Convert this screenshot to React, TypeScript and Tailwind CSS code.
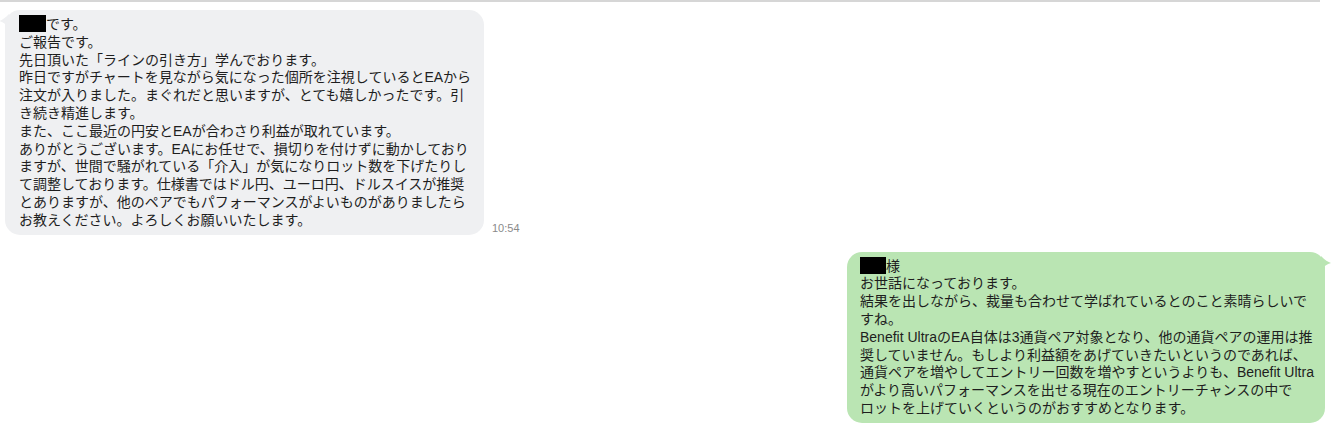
import React from "react";

const leftLines = [
  "ご報告です。",
  "先日頂いた「ラインの引き方」学んでおります。",
  "昨日ですがチャートを見ながら気になった個所を注視しているとEAから",
  "注文が入りました。まぐれだと思いますが、とても嬉しかったです。引",
  "き続き精進します。",
  "また、ここ最近の円安とEAが合わさり利益が取れています。",
  "ありがとうございます。EAにお任せで、損切りを付けずに動かしており",
  "ますが、世間で騒がれている「介入」が気になりロット数を下げたりし",
  "て調整しております。仕様書ではドル円、ユーロ円、ドルスイスが推奨",
  "とありますが、他のペアでもパフォーマンスがよいものがありましたら",
  "お教えください。よろしくお願いいたします。",
];

const rightLines = [
  "お世話になっております。",
  "結果を出しながら、裁量も合わせて学ばれているとのこと素晴らしいで",
  "すね。",
  "Benefit UltraのEA自体は3通貨ペア対象となり、他の通貨ペアの運用は推",
  "奨していません。もしより利益額をあげていきたいというのであれば、",
  "通貨ペアを増やしてエントリー回数を増やすというよりも、Benefit Ultra",
  "がより高いパフォーマンスを出せる現在のエントリーチャンスの中で",
  "ロットを上げていくというのがおすすめとなります。",
];

export default function App() {
  return (
    <div
      className="w-[1332px] h-[432px] bg-white text-[#1e1e1e] overflow-hidden"
      style={{ fontFamily: '"Liberation Sans", "Noto Sans CJK JP", sans-serif' }}
    >
      <div className="h-[2px] w-[1320px] bg-[#d6d6d6]" />
      <div className="flex items-end mt-[8px]">
        <div className="relative ml-[5px] w-[479px] rounded-[15px] bg-[#eff0f2] pl-[14px] pr-[10px] py-[5px] text-[14px] leading-[17.8px]">
          <svg className="absolute left-[-6px] top-[4px]" width="10" height="14" viewBox="0 0 10 14">
            <path d="M10 0 C6 4 3 6 0 7 C4 8 7 10 10 14 Z" fill="#eff0f2" />
          </svg>
          <div className="whitespace-nowrap">
            <span className="inline-block w-[27px] h-[17px] bg-black align-[-3px]" />
            です。
          </div>
          {leftLines.map((l, i) => (
            <div key={i} className="whitespace-nowrap">
              {l}
            </div>
          ))}
        </div>
        <div className="ml-[8px] mb-[-2px] text-[11px] text-[#8a8a8a]">10:54</div>
      </div>
      <div className="flex justify-end mt-[17px] pr-[7px]">
        <div className="relative w-[478px] rounded-[15px] bg-[#bae5b3] pl-[13px] pr-[8px] py-[5px] text-[14px] leading-[17.8px]">
          <svg className="absolute right-[-6px] top-[4px]" width="10" height="14" viewBox="0 0 10 14">
            <path d="M0 0 C4 4 7 6 10 7 C6 8 3 10 0 14 Z" fill="#bae5b3" />
          </svg>
          <div className="whitespace-nowrap">
            <span className="inline-block w-[26px] h-[17px] bg-black align-[-3px]" />
            様
          </div>
          {rightLines.map((l, i) => (
            <div key={i} className="whitespace-nowrap">
              {l}
            </div>
          ))}
        </div>
      </div>
    </div>
  );
}
